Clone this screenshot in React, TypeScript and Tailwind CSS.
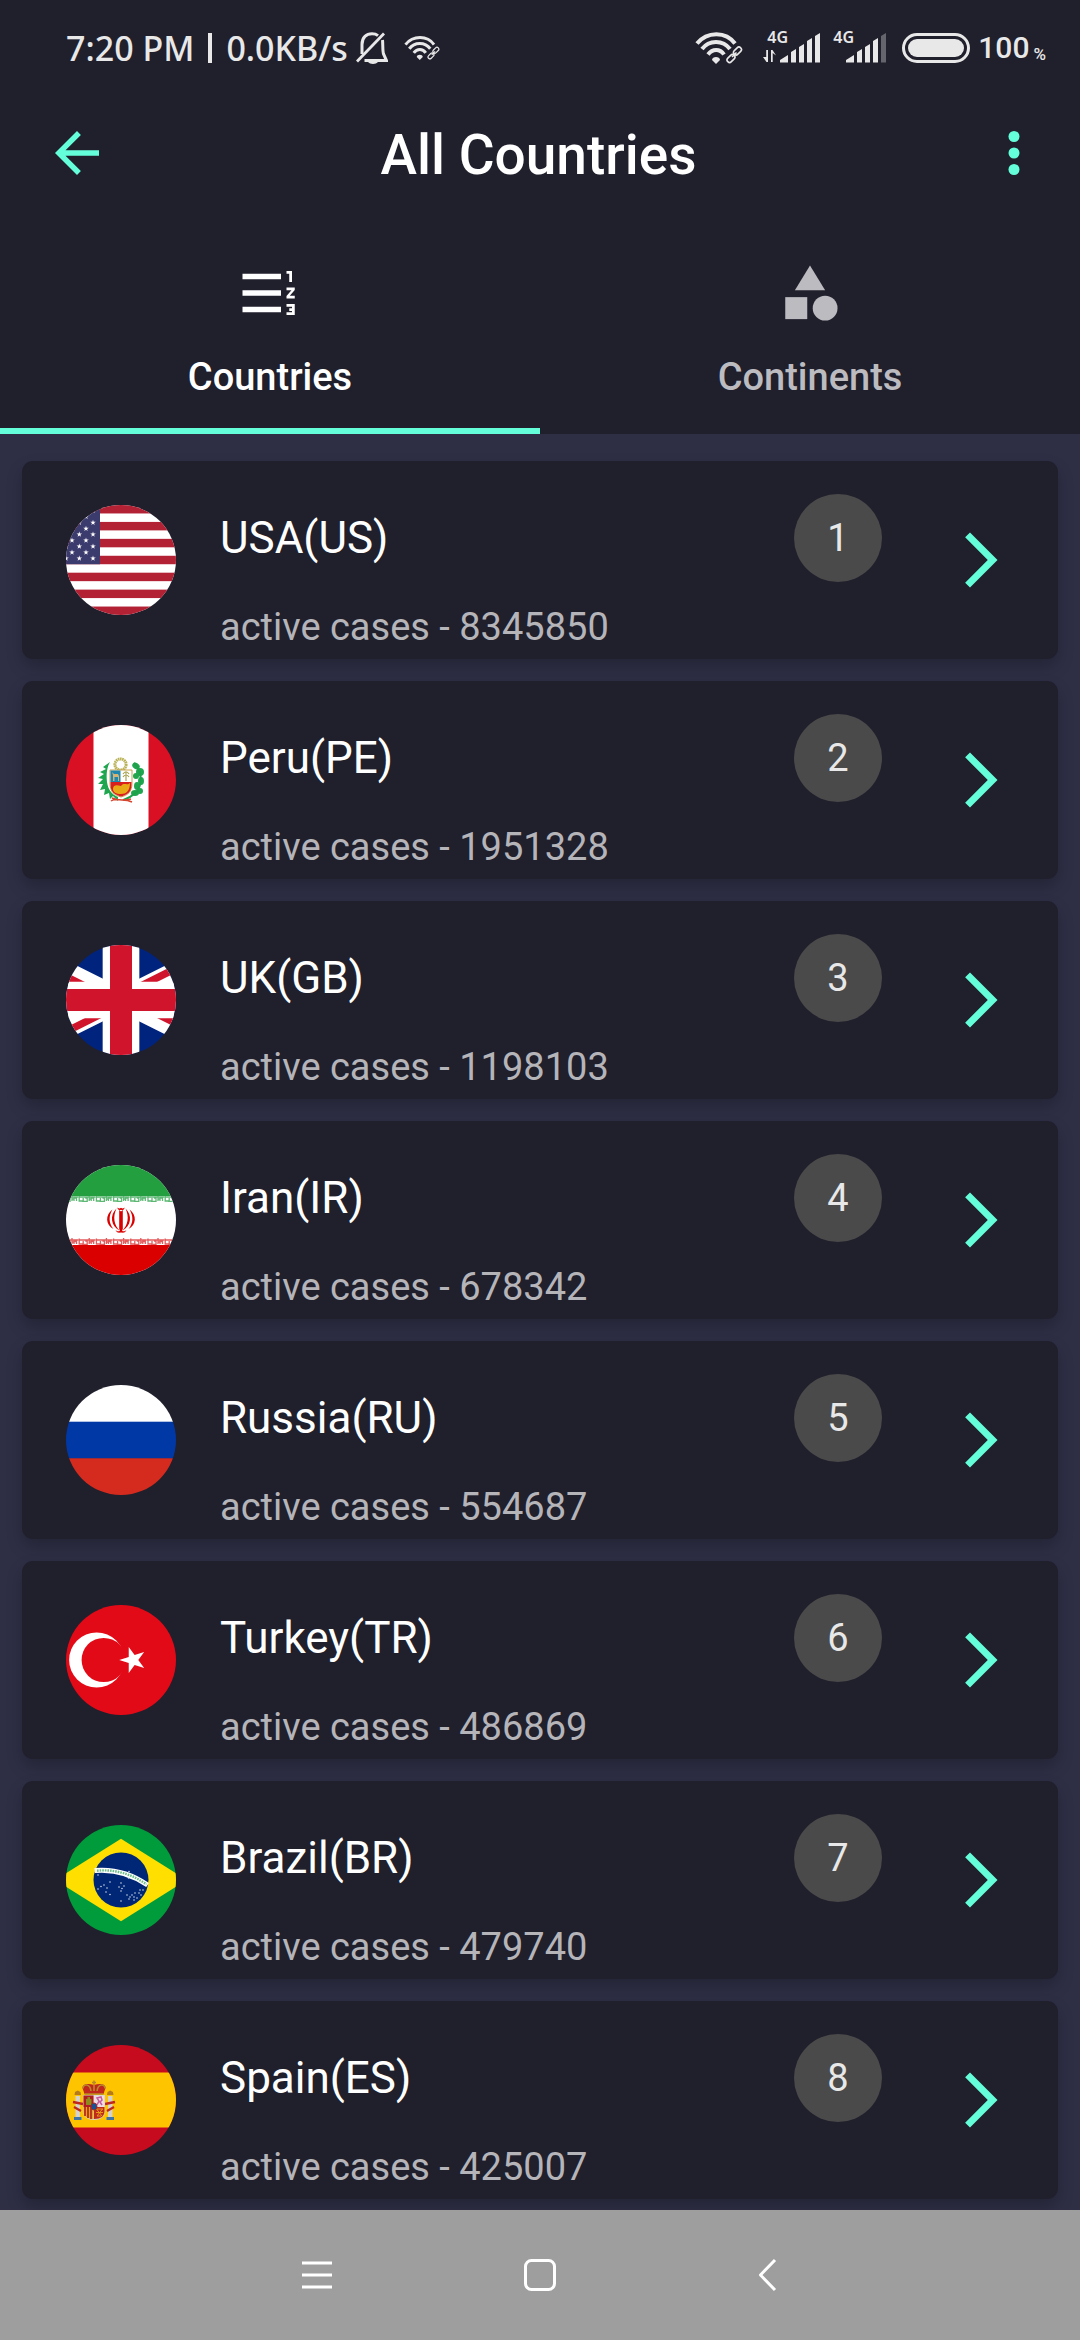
import { useId, useState } from "react";
import type { ReactNode } from "react";

const STAR =
  "M0 -1 L0.225 -0.309 L0.951 -0.309 L0.363 0.118 L0.588 0.809 L0 0.382 L-0.588 0.809 L-0.363 0.118 L-0.951 -0.309 L-0.225 -0.309 Z";

function Flag({ label, children }: { label: string; children: ReactNode }) {
  const id = useId();
  return (
    <svg viewBox="0 0 110 110" className="size-[110px] shrink-0" role="img" aria-label={label}>
      <clipPath id={id}>
        <circle cx="55" cy="55" r="55" />
      </clipPath>
      <g clipPath={`url(#${id})`}>{children}</g>
    </svg>
  );
}

function FlagUS() {
  const stripes = [0, 2, 4, 6, 8, 10, 12];
  const rows = [0, 1, 2, 3, 4, 5, 6, 7, 8];
  return (
    <Flag label="Flag of the USA">
      <rect width="110" height="110" fill="#fff" />
      {stripes.map((i) => (
        <rect key={i} y={(i * 110) / 13} width="110" height={110 / 13} fill="#b22234" />
      ))}
      <rect width="34" height={(110 / 13) * 7} fill="#3c3b6e" />
      {rows.flatMap((r) =>
        (r % 2 === 0 ? [0, 13.3, 27] : [6, 20]).map((x) => (
          <path key={`${r}-${x}`} d={STAR} fill="#fff" transform={`translate(${x} ${5.7 + r * 5.95}) scale(2.9)`} />
        ))
      )}
    </Flag>
  );
}

function FlagPE() {
  return (
    <Flag label="Flag of Peru">
      <rect width="110" height="110" fill="#d91023" />
      <rect x="27.5" width="55" height="110" fill="#fff" />
      <g fill="#21a650">
        <path d="M44 37 L37 42 L40 44 L34 47 L38 49 L32 53 L37 54 L32 59 L37 59 L34 65 L39 64 L38 70 L43 68 L44 74 L47 71 L52 76 L52 72 C45 69 42 64 41 57 C40 49 41 42 44 37 Z" />
        <ellipse cx="70" cy="41" rx="4" ry="3" transform="rotate(35 70 41)" />
        <ellipse cx="74" cy="47" rx="4" ry="4" />
        <ellipse cx="70" cy="51" rx="3" ry="3" />
        <ellipse cx="75" cy="56" rx="3" ry="4" />
        <ellipse cx="71" cy="61" rx="3" ry="4" />
        <ellipse cx="74" cy="66" rx="3" ry="3" />
        <ellipse cx="69" cy="68" rx="4" ry="3" />
      </g>
      <path d="M68 38 C77 46 77 62 68 69 C64 73 60 74 57 75" fill="none" stroke="#1fa04b" strokeWidth="2" />
      <path d="M45 76 C50 72 55 77 65 74 M46 73 C54 77 58 73 66 77" fill="none" stroke="#d8452f" strokeWidth="1.4" />
      <circle cx="54.5" cy="39.5" r="5.6" fill="#fff" stroke="#b9b356" strokeWidth="3" strokeDasharray="1.6 .5" />
      <path d="M44 45 H66 V58 C66 67 62 70 55 72 C48 70 44 67 44 58 Z" fill="#fff" stroke="#c8a34a" strokeWidth="1" />
      <path d="M44.5 45.5 H54.5 V57 H44.5 Z" fill="#1f86ad" />
      <path d="M47 56 V50 L46 47 L48 49 H52 L53 51 V56 H52 V52 H48.5 V56 Z" fill="#d7b271" />
      <path d="M60 47 V56 M57 49 C59 46 61 46 63 49 M57 52 C59 49 61 49 63 52" stroke="#a5a24d" strokeWidth="1.2" fill="none" />
      <path d="M44.5 57 H65.5 V59 C65.5 67 62 69.5 55 71.5 C48 69.5 44.5 67 44.5 59 Z" fill="#d8201f" />
      <path d="M47 64 C47 59 52 60 55 61 C58 57 61 61 64 58 C64 66 60 69 55 69 C50 69 47 67 47 64 Z" fill="#e8a916" />
    </Flag>
  );
}

function FlagGB() {
  const id = useId();
  return (
    <Flag label="Flag of the UK">
      <g transform="translate(-55 0) scale(3.6667)">
        <clipPath id={id}>
          <path d="M30 15 H60 V30 Z V30 H0 Z H0 V0 Z V0 H60 Z" />
        </clipPath>
        <rect width="60" height="30" fill="#00247d" />
        <path d="M0 0 L60 30 M60 0 L0 30" stroke="#fff" strokeWidth="6" />
        <path d="M0 0 L60 30 M60 0 L0 30" stroke="#cf142b" strokeWidth="4" clipPath={`url(#${id})`} />
        <path d="M30 0 V30 M0 15 H60" stroke="#fff" strokeWidth="10" />
        <path d="M30 0 V30 M0 15 H60" stroke="#cf142b" strokeWidth="6" />
      </g>
    </Flag>
  );
}

function FlagIR() {
  const marks = [0, 1, 2, 3, 4, 5, 6, 7];
  return (
    <Flag label="Flag of Iran">
      <rect width="110" height="110" fill="#fff" />
      <rect width="110" height="31" fill="#239f40" />
      <rect y="80" width="110" height="30" fill="#da0000" />
      {marks.map((i) => (
        <g key={i} transform={`translate(${i * 17.2 - 5} 0)`} fill="none" strokeWidth="1.3">
          <path d="M0 32 H17 M1 31 V36 H5 V33 M4 36.3 H9 V33 H7 M11 31 V36 M13 36 V33 H15.5 V36 M11 34 H13" stroke="#5cb873" />
          <path d="M0 75 H17 M1 73.5 V79 H5 V76 M4 79.3 H9 V76 H7 M11 73 V79 M13 79 V76.5 H15.5 V79 M11 77 H13" stroke="#e35b5b" />
        </g>
      ))}
      <g fill="#da0000">
        <path d="M55 67.7 L53.2 64 V45 L55 46.5 L56.8 45 V64 Z" />
        <path d="M51.5 42.5 C53 44 54 43.5 55 42.8 C56 43.5 57 44 58.5 42.5 C58.5 45.5 56 45 55 44.7 C54 45 51.5 45.5 51.5 42.5 Z" />
        <path d="M50.5 43.5 C43.5 50 44.5 61 54 66 C48 60 46.5 52 50.5 43.5 Z" />
        <path d="M59.5 43.5 C66.5 50 65.5 61 56 66 C62 60 63.5 52 59.5 43.5 Z" />
        <path d="M46.5 44.5 C39 50 39.5 60 47.5 64 C42.5 58 42.5 51 46.5 44.5 Z" />
        <path d="M63.5 44.5 C71 50 70.5 60 62.5 64 C67.5 58 67.5 51 63.5 44.5 Z" />
        <path d="M49.5 65 C52 67.5 54 65.5 55 65.5 C56 65.5 58 67.5 60.5 65 C59 68.5 56.5 67.5 55 67.5 C53.5 67.5 51 68.5 49.5 65 Z" />
      </g>
    </Flag>
  );
}

function FlagRU() {
  return (
    <Flag label="Flag of Russia">
      <rect width="110" height="37" fill="#fff" />
      <rect y="36.7" width="110" height="37" fill="#0039a6" />
      <rect y="73.3" width="110" height="37" fill="#d52b1e" />
    </Flag>
  );
}

function FlagTR() {
  return (
    <Flag label="Flag of Turkey">
      <rect width="110" height="110" fill="#e30a17" />
      <circle cx="30.7" cy="55" r="27.6" fill="#fff" />
      <circle cx="37.7" cy="55" r="22.1" fill="#e30a17" />
      <path d={STAR} fill="#fff" transform="translate(67 55) rotate(-90) scale(13.8)" />
    </Flag>
  );
}

const BRAZIL_STARS = [
  [32, 50], [63, 46.5], [62.5, 53], [44, 57], [35, 61.5], [32, 64], [38, 60], [40, 67], [41, 63],
  [44, 69.5], [55, 58], [53, 62], [56, 63.5], [58, 61], [55, 66], [55, 76], [61, 70], [64, 72],
  [66, 70], [69, 68], [68, 72], [68, 75], [73, 68], [74, 65], [77, 65], [75, 70], [71, 73], [63, 74],
];

function FlagBR() {
  return (
    <Flag label="Flag of Brazil">
      <rect width="110" height="110" fill="#009b3a" />
      <path d="M-10.7 55 L55 13.7 L120.7 55 L55 96.3 Z" fill="#fedf00" />
      <circle cx="55" cy="55" r="27.5" fill="#002776" />
      <path d="M28.7 45.5 Q57 43 81.6 60" fill="none" stroke="#fff" strokeWidth="5" />
      <path d="M31 45.7 Q57 43.2 80.5 59.3" fill="none" stroke="#6fbf8b" strokeWidth="2.4" strokeDasharray="1.6 1" />
      {BRAZIL_STARS.map(([x, y]) => (
        <circle key={`${x}-${y}`} cx={x} cy={y} r=".75" fill="#dfe5f2" />
      ))}
    </Flag>
  );
}

function FlagES() {
  return (
    <Flag label="Flag of Spain">
      <rect width="110" height="110" fill="#c60b1e" />
      <rect y="27.5" width="110" height="55" fill="#ffc400" />
      <rect x="9.5" y="51" width="4.5" height="21" fill="#d5d3cc" />
      <rect x="42" y="51" width="4.5" height="21" fill="#d5d3cc" />
      <path d="M8 72 H15.5 V75 H8 Z M40.5 72 H48 V75 H40.5 Z" fill="#3f74a6" />
      <path d="M8.500 50 L9 47 L11.7 45.5 L14.5 47 L15 50 Z M41 50 L41.5 47 L44.2 45.5 L47 47 L47.5 50 Z" fill="#b57a1c" />
      <path d="M7 57 L17 59 M8 62 L15 66 M49 57 L39 59 M48 62 L41 66" stroke="#c0281d" strokeWidth="2.4" />
      <path d="M17 50 H39 V66 C39 72 34 75 28 75 C22 75 17 72 17 66 Z" fill="#d5d3cc" />
      <path d="M17.5 50.5 H27.5 V62 H17.5 Z" fill="#b01c22" />
      <path d="M20 60 V54 H21.5 V52 H24 V54 H25.5 V60 Z" fill="#8f8a1c" />
      <path d="M28 50.5 H38.5 V62 H28 Z" fill="#ecdde2" />
      <path d="M31 60 L33 56 L31 53 L35 52 L36 55 L34 57 L36 60" fill="none" stroke="#c65aa0" strokeWidth="1.5" />
      <path d="M17.5 62 H27.5 V74 C21 74 17.5 71 17.5 66 Z" fill="#e8a514" />
      <path d="M19 62 V71 M22 62 V73 M25 62 V74" stroke="#b01c22" strokeWidth="1.6" />
      <path d="M28 62 H38.5 V66 C38.5 71 35 74 28 74 Z" fill="#bf2a1d" />
      <path d="M30 64 H37 M30 67.5 H37 M31 71 H35 M30.5 64 L36 71 M36.5 64 L31 71" stroke="#e8a514" strokeWidth=".9" />
      <ellipse cx="28" cy="61.5" rx="3" ry="3.6" fill="#1d4f91" stroke="#a3291d" strokeWidth=".8" />
      <path d="M18.5 49 L16.5 43 C16.5 39 22 38 28 40 C34 38 39.5 39 39.5 43 L37.5 49 Z" fill="#c0281d" />
      <path d="M18.5 49 H37.5 M17 43.5 C17 38.5 24 38.5 25 46 M39 43.5 C39 38.5 32 38.5 31 46 M28 46 V35.5 M26 37.5 H30" fill="none" stroke="#b8892a" strokeWidth="1.6" />
    </Flag>
  );
}

const COUNTRIES = [
  { name: "USA(US)", cases: 8345850, Flag: FlagUS },
  { name: "Peru(PE)", cases: 1951328, Flag: FlagPE },
  { name: "UK(GB)", cases: 1198103, Flag: FlagGB },
  { name: "Iran(IR)", cases: 678342, Flag: FlagIR },
  { name: "Russia(RU)", cases: 554687, Flag: FlagRU },
  { name: "Turkey(TR)", cases: 486869, Flag: FlagTR },
  { name: "Brazil(BR)", cases: 479740, Flag: FlagBR },
  { name: "Spain(ES)", cases: 425007, Flag: FlagES },
];

function WifiLinkIcon({ className }: { className: string }) {
  return (
    <svg viewBox="0 0 48 32" className={className} fill="none" stroke="currentColor" aria-hidden="true">
      <path d="M2 11.5 C12 -1 31 -1 40 11.5" strokeWidth="4" />
      <path d="M7 17 C14 7.5 28 7.5 35 17" strokeWidth="4" />
      <path d="M13 22.5 C17.5 16.5 25 16.5 29 22.5" strokeWidth="4" />
      <path d="M21 32 L17 28 C17 24 25 24 25 28 Z" fill="currentColor" stroke="none" />
      <g strokeWidth="1.6">
        <rect x="-4.5" y="-2.5" width="9" height="5" rx="2.5" transform="translate(42.500 19) rotate(-45)" />
        <rect x="-4.5" y="-2.5" width="9" height="5" rx="2.5" transform="translate(36 26.5) rotate(-45)" />
        <path d="M37 25 L41.5 20.500" />
      </g>
    </svg>
  );
}

function Signal({ weak, arrows }: { weak?: boolean; arrows?: boolean }) {
  return (
    <div className="relative flex h-[30px] items-end">
      <svg viewBox="0 0 57 30" className="h-[30px] w-[57px]" fill="currentColor" aria-hidden="true">
        {arrows && <path d="M0 24 L3.5 29 H5 V17 H3.2 V24 Z M8 29 H9.7 V20 L13 22.5 L9.5 17 H8 Z" />}
        <path d="M17 29.5 V27 L25 22 V29.5 Z M28 29.5 V19 L33 16 V29.5 Z M36 29.5 V14 L41 11 V29.5 Z M44 29.5 V8 L49 5 V29.5 Z" />
        <path d="M52 29.5 V3 L57 0 V29.5 Z" opacity={weak ? 0.35 : 1} />
      </svg>
      <span className="absolute -top-1.5 left-1 font-['Noto_Sans'] text-[16px] leading-5 font-semibold">4G</span>
    </div>
  );
}

function StatusBar() {
  return (
    <div className="flex h-[76px] items-center justify-between pt-6 pr-[34px] pb-1 pl-[66px] font-['Noto_Sans',sans-serif] text-[34px] leading-[48px] font-medium text-[#e8e8e8]">
      <div className="flex items-center">
        <span>7:20 PM</span>
        <span className="mx-[14px] h-[30px] w-1 bg-[#e8e8e8]" />
        <span>0.0KB/s</span>
        <svg viewBox="0 0 32 32" className="ml-2 size-8" fill="none" stroke="currentColor" aria-hidden="true">
          <path d="M6 22 V12.5 C6 5 10.5 1.8 16 1.8 C18.5 1.8 20.5 2.4 22 3.6 M26.5 8 C27 12 26.5 19 27.5 22 L30.5 28.5 H8.5" strokeWidth="3" />
          <path d="M1 29.5 L28 1.5" strokeWidth="2.8" />
          <path d="M12 30 H22 C20 32.5 14 32.5 12 30 Z" fill="currentColor" stroke="none" />
        </svg>
        <WifiLinkIcon className="ml-4 h-6 w-9" />
      </div>
      <div className="flex items-center">
        <WifiLinkIcon className="h-8 w-12" />
        <div className="ml-5 flex items-center gap-[9px]">
          <Signal arrows />
          <Signal weak />
        </div>
        <div className="ml-4 flex h-[30px] w-[68px] rounded-full border-[3px] border-current p-[3px]">
          <div className="flex-1 rounded-full bg-[#e8e8e8]" />
        </div>
        <span className="ml-2 font-['Roboto',sans-serif] text-[30px] leading-[48px]">100</span>
        <span className="ml-1 pt-3 font-['Roboto',sans-serif] text-[17px] leading-6">%</span>
      </div>
    </div>
  );
}

function ListNumberedIcon() {
  return (
    <svg viewBox="0 0 24 24" className="size-[66px]" fill="currentColor" aria-hidden="true">
      <path d="M18 17h2v.5h-1v1h1v.5h-2v1h3v-4h-3v1zm1-9h1V4h-2v1h1v3zm-1 3h1.800L18 13.100v.9h3v-1h-1.800l1.800-2.100V10h-3v1zM2 5v2h14V5H2zm0 14h14v-2H2v2zm0-6h14v-2H2v2z" />
    </svg>
  );
}

function ShapesIcon() {
  return (
    <svg viewBox="0 0 24 24" className="size-[66px]" fill="currentColor" aria-hidden="true">
      <path d="M12 2l-5.5 9h11z" />
      <circle cx="17.5" cy="17.5" r="4.5" />
      <path d="M3 13.5h8v8H3z" />
    </svg>
  );
}

const TABS = [
  { label: "Countries", Icon: ListNumberedIcon },
  { label: "Continents", Icon: ShapesIcon },
];

export default function App() {
  const [active, setActive] = useState("Countries");
  return (
    <div className="flex min-h-screen w-full flex-col overflow-x-hidden bg-[#2e2f45] font-['Roboto',sans-serif] text-white">
      <header className="bg-[#201f2c]">
        <StatusBar />
        <div className="flex h-[154px] items-center pr-[33px] pl-11">
          <button type="button" aria-label="Back" className="text-[#64ffda]">
            <svg viewBox="0 0 24 24" className="size-[66px]" fill="currentColor" aria-hidden="true">
              <path d="M20 11H7.830l5.590-5.590L12 4l-8 8 8 8 1.410-1.410L7.830 13H20v-2z" />
            </svg>
          </button>
          <h1 className="flex-1 pt-1 text-center text-[55px] leading-[66px] font-medium">All Countries</h1>
          <button type="button" aria-label="More options" className="pl-[14px] text-[#64ffda]">
            <svg viewBox="0 0 24 24" className="size-[66px]" fill="currentColor" aria-hidden="true">
              <circle cx="12" cy="6" r="2" />
              <circle cx="12" cy="12" r="2" />
              <circle cx="12" cy="18" r="2" />
            </svg>
          </button>
        </div>
        <div role="tablist" className="flex">
          {TABS.map(({ label, Icon }) => (
            <button
              key={label}
              type="button"
              role="tab"
              aria-selected={active === label}
              onClick={() => setActive(label)}
              className={
                active === label
                  ? "flex h-[204px] flex-1 flex-col items-center gap-[29px] border-b-[6px] border-[#64ffda] pt-[30px] text-white"
                  : "flex h-[204px] flex-1 flex-col items-center gap-[29px] border-b-[6px] border-transparent pt-[30px] text-[#bcbbc0]"
              }
            >
              <Icon />
              <span className="text-[38px] leading-[44px] font-medium">{label}</span>
            </button>
          ))}
        </div>
      </header>

      <main className="flex-1 px-[22px] pt-[27px] pb-[11px]">
        <ul className="flex flex-col gap-[22px]">
          {COUNTRIES.map(({ name, cases, Flag: CountryFlag }, i) => (
            <li key={name} className="rounded-[11px] bg-[#201f2c] shadow-[0_8px_16px_rgba(0,0,0,0.22)]">
              <button type="button" className="flex h-[198px] w-full items-center px-11 text-left">
                <CountryFlag />
                <span className="ml-11 flex flex-1 flex-col self-stretch pt-[51px]">
                  <span className="text-[44px] leading-[52px]">{name}</span>
                  <span className="mt-[41px] text-[38px] leading-[44px] text-[#b5b4b9]">active cases - {cases}</span>
                </span>
                <span className="mt-[33px] mr-[66px] flex size-[88px] items-center justify-center self-start rounded-full bg-[#4a4a4a] text-[38px] leading-[44px] text-[#e8e8e8]">
                  {i + 1}
                </span>
                <svg viewBox="0 0 24 24" className="size-[66px] shrink-0 text-[#64ffda]" fill="currentColor" aria-hidden="true">
                  <path d="M6.230 20.230L8 22l10-10L8 2 6.230 3.770 14.460 12z" />
                </svg>
              </button>
            </li>
          ))}
        </ul>
      </main>

      <nav className="flex h-[130px] items-center justify-center gap-[175px] bg-[#9e9e9e]">
        <button type="button" aria-label="Recent apps">
          <svg viewBox="0 0 48 48" className="size-12" fill="none" stroke="#fff" strokeWidth="3" aria-hidden="true">
            <path d="M9 12 H39 M9 24 H39 M9 36 H39" />
          </svg>
        </button>
        <button type="button" aria-label="Home">
          <svg viewBox="0 0 48 48" className="size-12" fill="none" stroke="#fff" strokeWidth="3" aria-hidden="true">
            <rect x="9.5" y="9.5" width="29" height="29" rx="6" />
          </svg>
        </button>
        <button type="button" aria-label="Back">
          <svg viewBox="0 0 48 48" className="size-12" fill="none" stroke="#fff" strokeWidth="3" strokeLinejoin="round" aria-hidden="true">
            <path d="M36 9 L21.5 24 L36 39" />
          </svg>
        </button>
      </nav>
    </div>
  );
}
